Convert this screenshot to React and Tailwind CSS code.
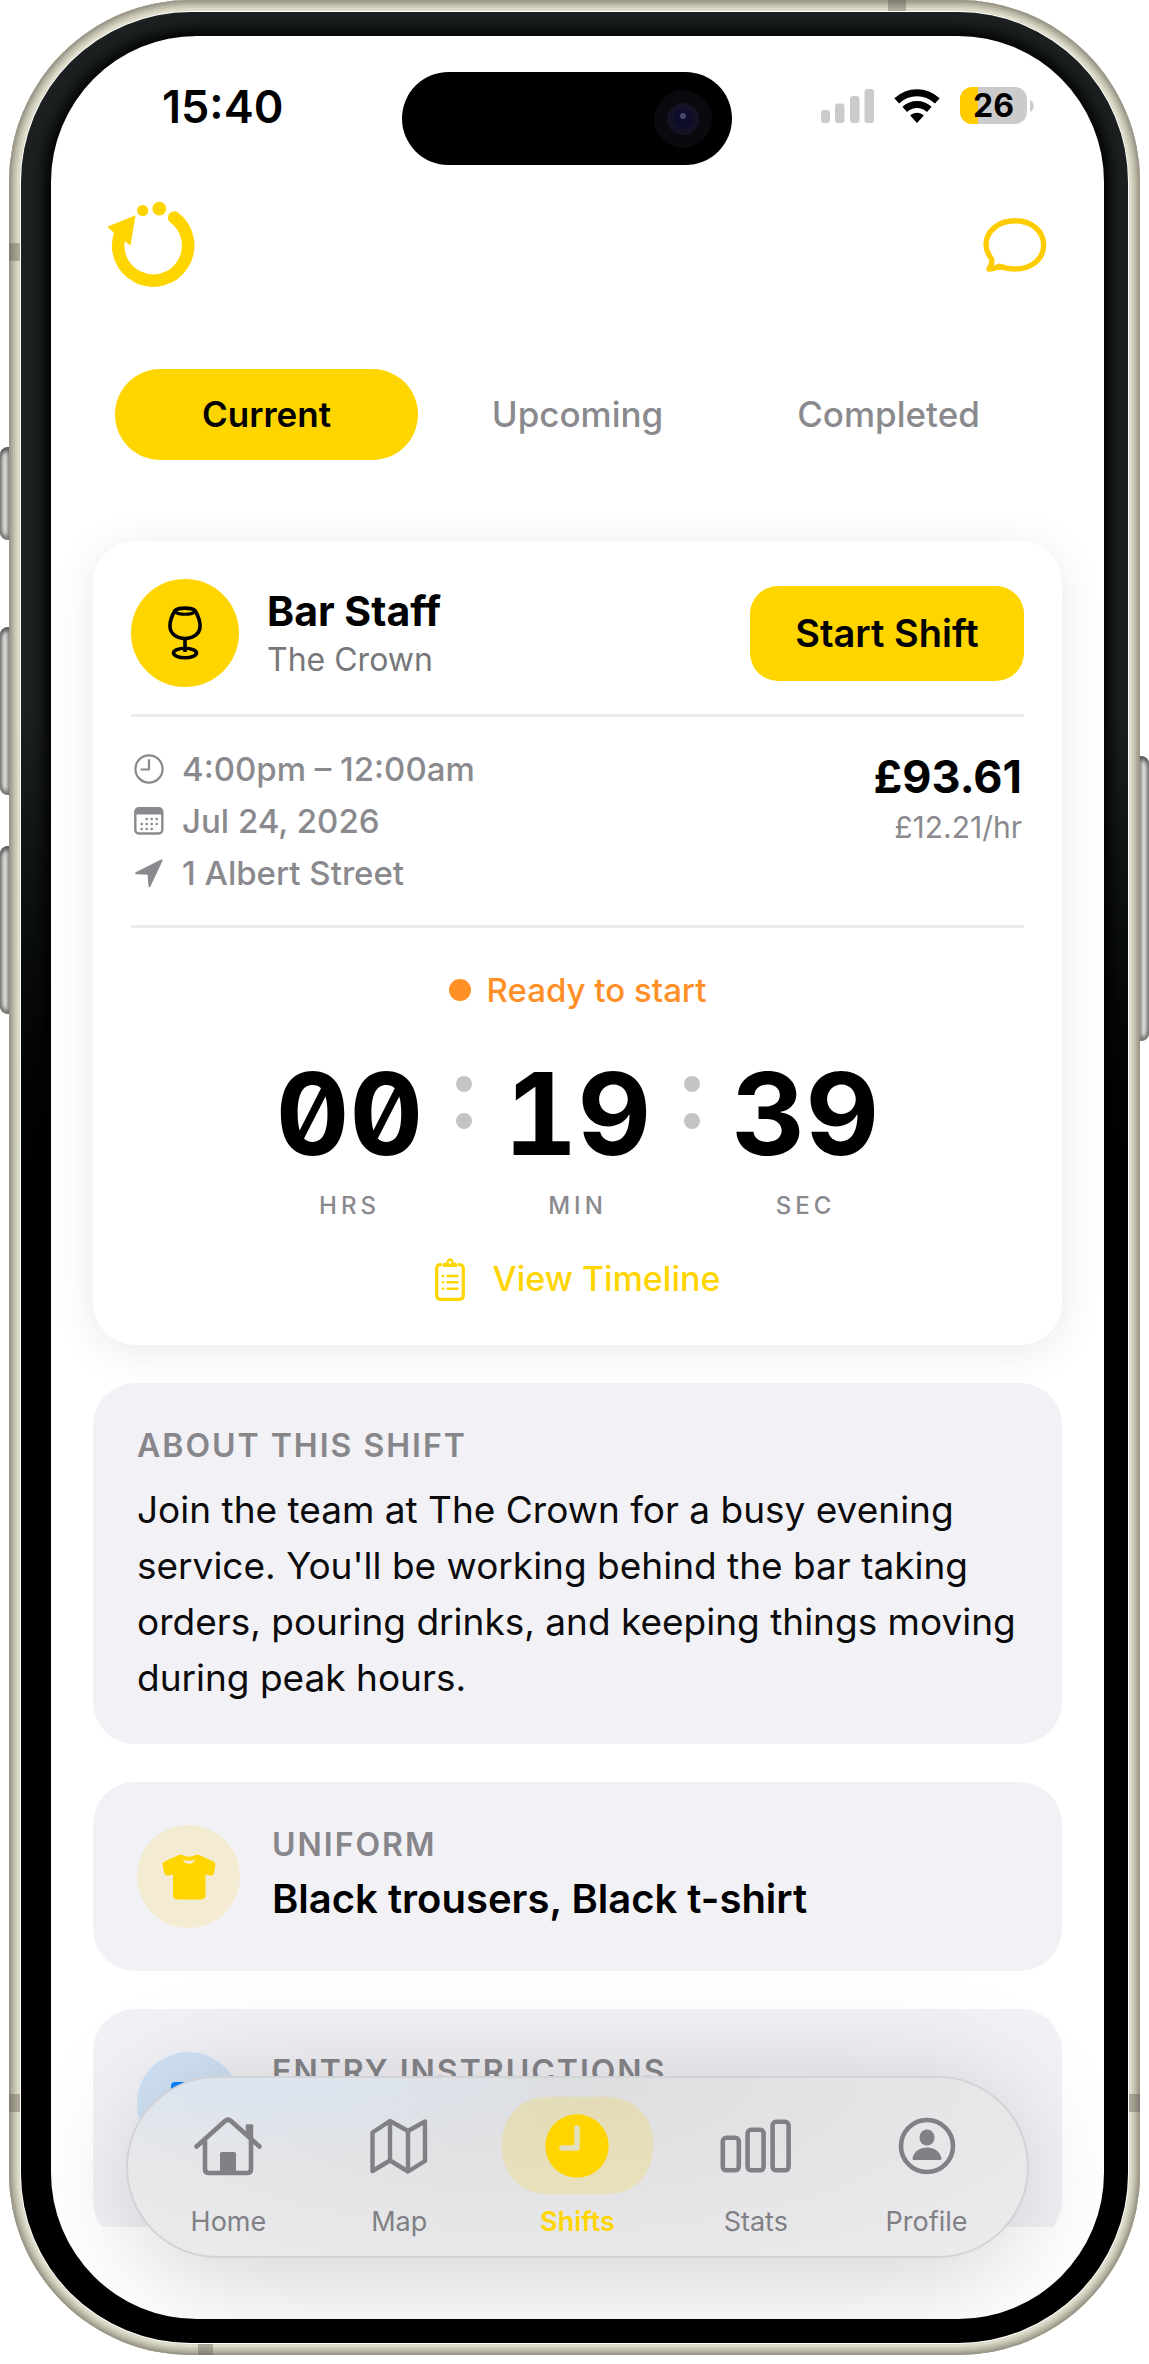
import { useState } from "react";

const FRAME_RINGS =
  "shadow-[inset_0_0_0_2px_#9c988a,inset_0_0_0_4px_#aeab9b,inset_0_0_0_6px_#bfbdac,inset_0_0_0_8px_#cecbb9]";

function SideButton({ className }) {
  return (
    <span
      aria-hidden="true"
      className={
        "absolute w-[10px] bg-linear-to-r from-[#b5b4ac] via-[#dcdcdb] to-[#a9a9a5] shadow-[inset_0_4px_4px_#55575a,inset_0_-4px_4px_#77776f] " +
        className
      }
    />
  );
}

function AntennaBand({ className }) {
  return <span aria-hidden="true" className={"absolute bg-[#5f5b4f]/40 " + className} />;
}

function Signal() {
  return (
    <svg viewBox="0 0 53 34" className="h-[34px] w-[53px] shrink-0 fill-[#cbcbcb]" aria-label="Signal">
      <rect x="0" y="21" width="9" height="13" rx="3" />
      <rect x="14" y="14.500" width="9.500" height="19.500" rx="3" />
      <rect x="29" y="7" width="9.500" height="27" rx="3" />
      <rect x="43.500" y="0" width="9.500" height="34" rx="3" />
    </svg>
  );
}

function Wifi() {
  return (
    <svg viewBox="0 0 46 34" className="h-[34px] w-[46px] shrink-0" fill="none" stroke="#000" strokeWidth="7" aria-label="Wi-Fi">
      <path d="M2.700 11.800C14.500 1 31.500 1 43.300 11.800" />
      <path d="M10.700 20.300C18 13.800 28 13.800 35.300 20.300" />
      <path d="M23 34 16.200 26.600C20 22.800 26 22.800 29.800 26.600Z" fill="#000" stroke="none" />
    </svg>
  );
}

function Battery() {
  return (
    <div className="flex items-center gap-[3px]">
      <div className="flex h-[37px] w-[67px] items-center justify-center rounded-[12px] bg-linear-to-r from-[#ffcc00] from-27% to-[#cbcbcb] to-27% text-[32px] leading-none font-bold">
        26
      </div>
      <svg viewBox="0 0 4 12" className="h-3 w-1 fill-[#cbcbcb]" aria-hidden="true">
        <path d="M0 0C5 2 5 10 0 12Z" />
      </svg>
    </div>
  );
}

function Logo() {
  return (
    <svg viewBox="0 0 88 87" className="h-[87px] w-[88px]" fill="#ffd500" aria-label="Logo">
      <path d="M67.200 16.600A35 35 0 1 1 13.500 32" fill="none" stroke="#ffd500" strokeWidth="12.500" strokeLinecap="round" />
      <path d="M0.300 25.800 28.600 14.300 23.500 44.500 18 40.500 6.500 31.500Z" />
      <circle cx="35.700" cy="9.500" r="5.600" />
      <circle cx="52.300" cy="7.700" r="6.900" />
    </svg>
  );
}

function ChatIcon() {
  return (
    <svg viewBox="0 0 64 54" className="h-[54px] w-16" fill="none" stroke="#ffcc00" strokeWidth="5.400" strokeLinejoin="round" aria-hidden="true">
      <path d="M32 2.800C48.500 2.800 60.600 13 60.600 27S48.500 51 32 51C26.500 51 21 49.900 16.700 48.200C13 50.200 9.500 51 6 51C8.800 47 9.800 43.500 8 40C5 36 3 32.500 3 27C3 13 15.500 2.800 32 2.800Z" />
    </svg>
  );
}

function GlassIcon() {
  return (
    <svg viewBox="0 0 34 54" className="h-[54px] w-[34px]" fill="none" stroke="#000" strokeWidth="3.600" strokeLinejoin="round" aria-hidden="true">
      <path d="M7 4.500C2.500 12 1.800 18 2 21C2.500 28 9 32.500 17 32.500S31.500 28 32 21C32.200 18 31.500 12 27 4.500C24 1.300 10 1.300 7 4.500Z" />
      <path d="M7.500 6C11 9 23 9 26.500 6" strokeWidth="3" />
      <path d="M17 32V46" />
      <ellipse cx="17" cy="47" rx="11.500" ry="4.700" />
    </svg>
  );
}

function ClockOutline() {
  return (
    <svg viewBox="0 0 30 30" className="size-[30px] shrink-0" fill="none" stroke="#8a8a8e" strokeWidth="2.200" strokeLinecap="round" strokeLinejoin="round" aria-hidden="true">
      <circle cx="15" cy="15" r="13.600" />
      <path d="M15 6V15.500H7.500" />
    </svg>
  );
}

function CalendarIcon() {
  const dots = [[12.7, 12], [17.7, 12], [22.7, 12], [7.7, 17], [12.7, 17], [17.7, 17], [22.7, 17], [7.7, 22], [12.7, 22], [17.7, 22]];
  return (
    <svg viewBox="0 0 30 28" className="h-7 w-[30px] shrink-0" aria-hidden="true">
      <rect x="1.300" y="1.300" width="27" height="25.200" rx="3.500" fill="none" stroke="#8a8a8e" strokeWidth="2.400" />
      <path d="M1 7.500V4.500Q1 1 5 1H24.500Q28.500 1 28.500 4.500V7.500Z" fill="#8a8a8e" />
      {dots.map(([x, y]) => (
        <circle key={x + "-" + y} cx={x} cy={y} r="1.300" fill="#8a8a8e" />
      ))}
    </svg>
  );
}

function LocationArrow() {
  return (
    <svg viewBox="0 0 30 30" className="size-[30px] shrink-0" fill="#8a8a8e" stroke="#8a8a8e" strokeWidth="2" strokeLinejoin="round" aria-hidden="true">
      <path d="M27.500 2.500 2.200 15.200 14.500 15.800 15.500 28.200Z" />
    </svg>
  );
}

function ClipboardIcon() {
  return (
    <svg viewBox="0 0 30 43" className="h-[43px] w-[30px] shrink-0" fill="none" stroke="#ffd500" strokeLinecap="round" aria-hidden="true">
      <path d="M6 6.500C3 6.500 1.700 8 1.700 10.500V37.500C1.700 40 3 41.300 5.500 41.300H24.500C27 41.300 28.300 40 28.300 37.500V10.500C28.300 8 27 6.500 24 6.500" strokeWidth="3.200" />
      <path d="M8 9V6Q8 4.500 10 4.500H11.500C12 1.500 13 .3 15 .3S18 1.500 18.500 4.500H20Q22 4.500 22 6V9Z" fill="#ffd500" stroke="none" />
      <circle cx="15" cy="4.300" r="1.400" fill="#fff" stroke="none" />
      <path d="M12.500 18H22.500M12.500 24.300H22.500M12.500 30.700H22.500M8 18h.2M8 24.300h.2M8 30.700h.2" strokeWidth="2.500" />
    </svg>
  );
}

function ShirtIcon() {
  return (
    <svg viewBox="0 0 54 46" className="h-[46px] w-[54px]" fill="#ffd500" aria-hidden="true">
      <path
        fillRule="evenodd"
        d="M17 1Q18.500 .3 20 1Q27 4.500 34 1Q35.500 .3 37 1L51.500 7.500Q53.700 8.700 53.400 11L52 19Q51.300 22.300 48 21.500L43.500 20.500V40.500Q43.500 45.500 38.500 45.500H16Q11 45.500 11 40.500V20.500L6.500 21.500Q3 22.300 2.300 19L.6 11Q.3 8.700 2.500 7.500ZM20.500 5.500Q22.500 9.700 27 9.700T33.500 5.500Q27 8 20.500 5.500Z"
      />
    </svg>
  );
}

function DoorIcon() {
  return (
    <svg viewBox="0 0 36 44" className="h-11 w-9" fill="#0a84ff" aria-hidden="true">
      <path d="M4 0H28Q32 0 32 4V40H36V44H0V4Q0 0 4 0ZM25 20a2.500 2.500 0 1 0 .1 0Z" />
    </svg>
  );
}

function HomeIcon() {
  return (
    <svg viewBox="0 0 68 60" className="h-[60px] w-[68px]" fill="none" stroke="#808085" strokeWidth="4.600" strokeLinecap="round" strokeLinejoin="round" aria-hidden="true">
      <path d="M2.600 30.500 31 5Q34 2.500 37 5L65.400 30.500" />
      <path d="M11 25V53Q11 57 15 57H53Q57 57 57 53V25" />
      <path d="M53 9.500H58V24L53 20Z" fill="#808085" strokeWidth="2.500" />
      <path d="M26 57V38Q26 36 28 36H40Q42 36 42 38V57Z" fill="#808085" stroke="none" />
    </svg>
  );
}

function MapIcon() {
  return (
    <svg viewBox="0 0 60 56" className="h-14 w-[60px]" fill="none" stroke="#808085" strokeWidth="4.400" strokeLinejoin="round" aria-hidden="true">
      <path d="M3.500 14.500 21 3 39 13 56 3.500V43L39 53.500 21 42.500 3.500 53Z" />
      <path d="M21 3V42.500M39 13V53.500" />
    </svg>
  );
}

function ShiftsIcon() {
  return (
    <svg viewBox="0 0 64 64" className="size-16" aria-hidden="true">
      <circle cx="32" cy="32" r="31.700" fill="#ffd500" />
      <path d="M32 14V34H17" fill="none" stroke="#e4dec0" strokeWidth="5.500" strokeLinecap="round" strokeLinejoin="round" />
    </svg>
  );
}

function StatsIcon() {
  return (
    <svg viewBox="0 0 72 54" className="h-[54px] w-[72px]" fill="none" stroke="#808085" strokeWidth="4.600" aria-hidden="true">
      <rect x="2.800" y="18.800" width="16" height="32.500" rx="3.500" />
      <rect x="27.600" y="10.800" width="16" height="40.500" rx="3.500" />
      <rect x="52.600" y="2.800" width="16" height="48.500" rx="3.500" />
    </svg>
  );
}

function ProfileIcon() {
  return (
    <svg viewBox="0 0 58 58" className="size-[58px]" fill="#808085" aria-hidden="true">
      <circle cx="29" cy="29" r="26" fill="none" stroke="#808085" strokeWidth="4.600" />
      <ellipse cx="29" cy="20.500" rx="7.500" ry="8" />
      <path d="M14.500 41.500C15.500 35 21.500 30.500 29 30.500S42.500 35 43.500 41.500Q43.500 43 42 43H16Q14.500 43 14.500 41.500Z" />
    </svg>
  );
}

const TABS = ["Current", "Upcoming", "Completed"];

const DETAILS = [
  { icon: <ClockOutline />, text: "4:00pm – 12:00am" },
  { icon: <CalendarIcon />, text: "Jul 24, 2026" },
  { icon: <LocationArrow />, text: "1 Albert Street" },
];

const NAV = [
  { label: "Home", icon: <HomeIcon /> },
  { label: "Map", icon: <MapIcon /> },
  { label: "Shifts", icon: <ShiftsIcon />, active: true },
  { label: "Stats", icon: <StatsIcon /> },
  { label: "Profile", icon: <ProfileIcon /> },
];

function Unit({ value, label }) {
  return (
    <div className="flex w-[146px] flex-col items-center">
      <span className="text-[114px] leading-[116px] font-bold slashed-zero tabular-nums">{value}</span>
      <span className="mt-[18px] text-[24px] leading-8 font-medium tracking-[4px] text-[#8a8a8e]">{label}</span>
    </div>
  );
}

function Colon() {
  return (
    <div aria-hidden="true" className="mt-5 flex flex-col gap-[21px]">
      <span className="size-4 rounded-full bg-[#c4c4c6]" />
      <span className="size-4 rounded-full bg-[#c4c4c6]" />
    </div>
  );
}

function InfoCard({ icon, tint, title, children }) {
  return (
    <section className="flex shrink-0 items-start gap-8 rounded-[42px] bg-[#f2f1f6] px-11 py-[43px]">
      <div className={"flex size-[103px] shrink-0 items-center justify-center rounded-full " + tint}>{icon}</div>
      <div className="flex min-w-0 flex-col gap-2">
        <h3 className="text-[32px] leading-10 font-semibold tracking-[2px] text-[#86868b]">{title}</h3>
        {children}
      </div>
    </section>
  );
}

export default function App() {
  const [tab, setTab] = useState("Current");

  return (
    <main className="h-screen min-h-[1600px] bg-white px-[9px] pb-[9px] font-['Inter',sans-serif] text-black">
      <div className="relative h-full">
        <SideButton className="top-[447px] -left-[9px] h-[93px] rounded-l-lg" />
        <SideButton className="top-[627px] -left-[9px] h-[168px] rounded-l-lg" />
        <SideButton className="top-[846px] -left-[9px] h-[168px] rounded-l-lg" />
        <SideButton className="top-[756px] -right-[9px] h-[285px] rounded-r-lg" />

        <div className={"relative h-full rounded-[182px] bg-[#dcdac8] p-3 " + FRAME_RINGS}>
          <AntennaBand className="top-[243px] left-0 h-[18px] w-3" />
          <AntennaBand className="top-0 right-[234px] h-3 w-[18px]" />
          <AntennaBand className="bottom-[243px] left-0 h-[18px] w-3" />
          <AntennaBand className="right-0 bottom-[243px] h-[18px] w-3" />
          <AntennaBand className="bottom-0 left-[189px] h-3 w-[15px]" />

          <div className="relative h-full rounded-[170px] bg-linear-to-b from-[#1c2021] from-30% to-black to-58% py-6 pr-6 pl-[30px] shadow-[0_0_0_1px_#ffffff]">
            <div className="relative flex h-full flex-col overflow-hidden rounded-[146px] bg-white shadow-[0_0_14px_6px_#000000]">
              <header className="shrink-0">
                <div className="flex items-start pt-9 pr-[70px] pl-[111px]">
                  <time className="w-[240px] pt-[7px] text-[45px] leading-[56px] font-semibold">15:40</time>
                  <div className="flex h-[93px] w-[330px] items-center justify-end rounded-full bg-black pr-5">
                    <div className="flex size-[58px] items-center justify-center rounded-full bg-[#0b090d]">
                      <div className="flex size-8 items-center justify-center rounded-full bg-[#141224]">
                        <div className="flex size-5 justify-center rounded-full bg-[#0d0c2a] pt-1">
                          <span className="size-1.5 rounded-full bg-[#4a4668]" />
                        </div>
                      </div>
                    </div>
                  </div>
                  <div className="ml-auto flex items-center gap-5 pt-[15px]">
                    <Signal />
                    <Wifi />
                    <Battery />
                  </div>
                </div>

                <div className="flex items-center justify-between pt-9 pr-[57px] pl-14">
                  <Logo />
                  <button type="button" aria-label="Messages">
                    <ChatIcon />
                  </button>
                </div>

                <nav className="mt-[81px] grid grid-cols-3 gap-2 px-16">
                  {TABS.map((name) => (
                    <button
                      key={name}
                      type="button"
                      aria-pressed={tab === name}
                      onClick={() => setTab(name)}
                      className={
                        "h-[91px] rounded-full text-[35px] " +
                        (tab === name ? "bg-[#ffd500] font-semibold text-black" : "font-medium text-[#8a8a8e]")
                      }
                    >
                      {name}
                    </button>
                  ))}
                </nav>
              </header>

              <div className="flex min-h-0 flex-1 flex-col gap-[38px] overflow-hidden px-[42px] pt-[81px]">
                <section className="shrink-0 rounded-[42px] bg-white px-[38px] pt-[38px] pb-[42px] shadow-[0_6px_44px_rgba(0,0,0,0.09)]">
                  <div className="flex items-center border-b-[3px] border-[#ececec] pb-[27px]">
                    <div className="flex size-[108px] shrink-0 items-center justify-center rounded-full bg-[#ffd500]">
                      <GlassIcon />
                    </div>
                    <div className="ml-7 flex-1 pt-0.5">
                      <h1 className="text-[41px] leading-[52px] font-bold">Bar Staff</h1>
                      <p className="text-[32px] leading-[46px] text-[#77777a]">The Crown</p>
                    </div>
                    <button type="button" className="h-[95px] w-[274px] rounded-[28px] bg-[#ffd500] text-[38px] font-semibold">
                      Start Shift
                    </button>
                  </div>

                  <div className="flex justify-between border-b-[3px] border-[#ececec] pt-[26px] pb-[26px]">
                    <ul className="pl-[3px] text-[33px] leading-[52px] font-medium text-[#8a8a8e]">
                      {DETAILS.map(({ icon, text }) => (
                        <li key={text} className="flex items-center gap-[18px]">
                          {icon}
                          {text}
                        </li>
                      ))}
                    </ul>
                    <div className="pt-1.5 pr-0.5 text-right">
                      <p className="text-[45px] leading-[56px] font-bold">£93.61</p>
                      <p className="text-[30px] leading-[44px] text-[#8a8a8e]">£12.21/hr</p>
                    </div>
                  </div>

                  <div className="flex flex-col items-center">
                    <p className="mt-[38px] flex items-center gap-4 text-[33px] leading-12 font-medium text-[#ff8f26]">
                      <span className="size-[22px] rounded-full bg-[#ff8f26]" />
                      Ready to start
                    </p>
                    <div className="mt-[42px] flex gap-[33px]">
                      <Unit value="00" label="HRS" />
                      <Colon />
                      <Unit value="19" label="MIN" />
                      <Colon />
                      <Unit value="39" label="SEC" />
                    </div>
                    <button type="button" className="mt-[33px] flex items-center gap-7 text-[34px] leading-12 font-medium text-[#ffd500]">
                      <ClipboardIcon />
                      View Timeline
                    </button>
                  </div>
                </section>

                <section className="shrink-0 rounded-[42px] bg-[#f2f1f6] px-11 pt-[43px] pb-[38px]">
                  <h2 className="text-[32px] leading-10 font-semibold tracking-[2px] text-[#86868b]">ABOUT THIS SHIFT</h2>
                  <p className="mt-4 text-[37px] leading-14 text-[#0b0b0c]">
                    Join the team at The Crown for a busy evening service. You'll be working behind the bar taking orders,
                    pouring drinks, and keeping things moving during peak hours.
                  </p>
                </section>

                <InfoCard icon={<ShirtIcon />} tint="bg-[#f4ecd2]" title="UNIFORM">
                  <p className="text-[40px] leading-[52px] font-semibold">Black trousers, Black t-shirt</p>
                </InfoCard>

                <InfoCard icon={<DoorIcon />} tint="bg-[#d2e3f7]" title="ENTRY INSTRUCTIONS">
                  <div className="h-[100px]" />
                </InfoCard>
              </div>

              <div className="h-[92px] shrink-0" />

              <div className="absolute inset-x-[75px] bottom-[61px]">
                <div aria-hidden="true" className="absolute inset-x-2 top-2 -bottom-6 rounded-[91px] bg-black/17 blur-[54px]" />
                <nav className="relative grid h-[182px] grid-cols-[163fr_163fr_178fr_163fr_163fr] gap-2 rounded-[91px] border-2 border-[#d3d3d5] bg-[radial-gradient(ellipse_at_12%_0%,#dbe5f1_0%,rgba(219,229,241,0)_34%),radial-gradient(ellipse_at_46%_0%,#dddddf_0%,#e6e6e8_60%,#ececef_100%)] px-[19px]">
                  {NAV.map(({ label, icon, active }) => (
                    <a
                      key={label}
                      href={"#" + label.toLowerCase()}
                      aria-current={active ? "page" : undefined}
                      className={
                        "flex flex-col items-center pt-[19px] text-[27px] leading-8 " +
                        (active ? "font-semibold text-[#ffd500]" : "font-normal text-[#808085]")
                      }
                    >
                      <span
                        className={
                          "flex h-[97px] w-[151px] items-center justify-center rounded-[44px] " +
                          (active ? "bg-[#ffd500]/18" : "")
                        }
                      >
                        {icon}
                      </span>
                      <span className="mt-3">{label}</span>
                    </a>
                  ))}
                </nav>
              </div>
            </div>
          </div>
        </div>
      </div>
    </main>
  );
}
